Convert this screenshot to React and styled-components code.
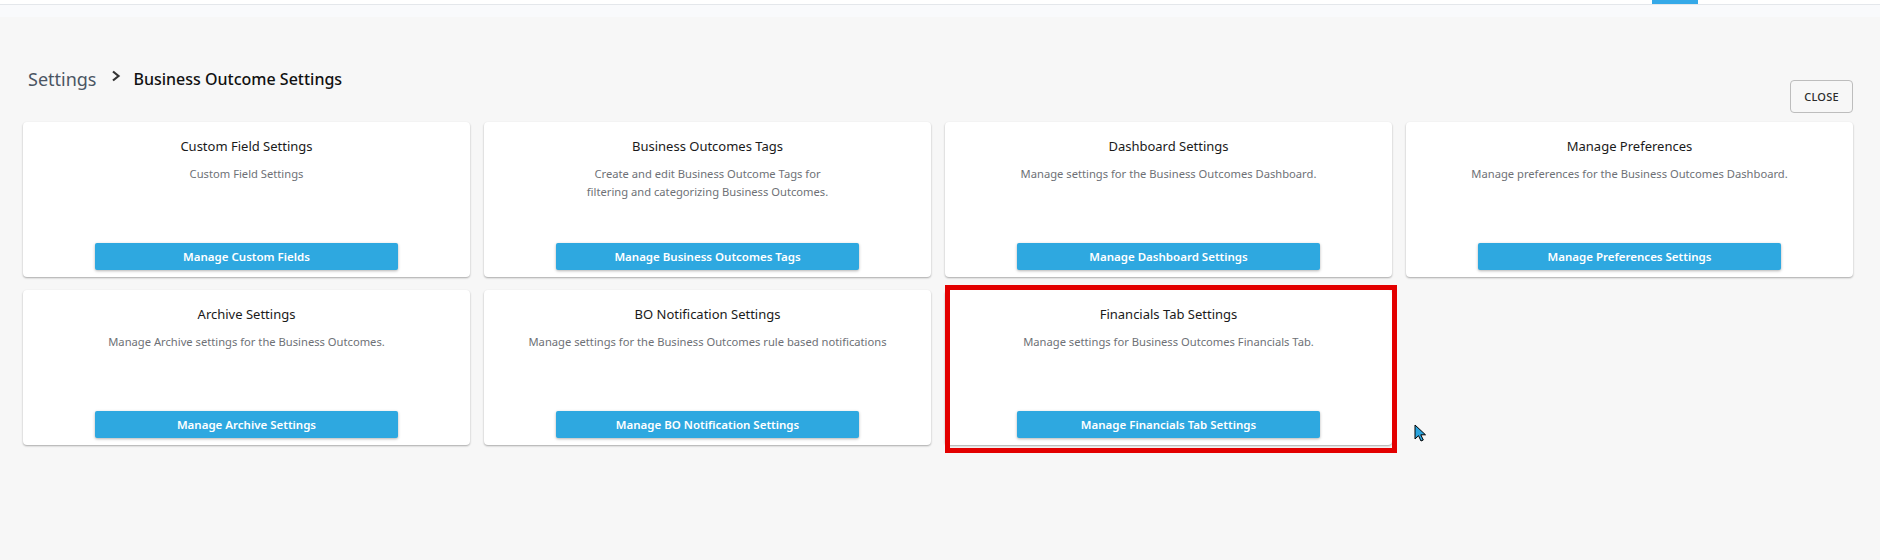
import React from 'react';
import styled, { createGlobalStyle } from 'styled-components';

const GlobalStyle = createGlobalStyle`
  body {
    margin: 0;
    background: #f7f7f7;
    font-family: "Noto Sans", "Open Sans", Arial, sans-serif;
  }
`;

const Page = styled.div`
  min-height: 560px;
  background: linear-gradient(#f9fafc 0, #f9fafc 17px, #f7f7f7 17px);
`;

const TopBar = styled.div`
  height: 4px;
  background: #fff;
  border-bottom: 1px solid #e4e7eb;
  display: flex;
  justify-content: flex-end;
  padding-right: 182px;
`;

const TabIndicator = styled.div`
  width: 46px;
  height: 4px;
  background: #35a9e8;
`;

const Content = styled.div`
  padding: 62px 27px 0 23px;
`;

const Header = styled.div`
  display: flex;
  justify-content: space-between;
  align-items: flex-start;
`;

const Breadcrumb = styled.div`
  display: flex;
  align-items: center;
  height: 24px;
  padding-left: 5px;
`;

const Crumb = styled.span`
  font-size: 18px;
  color: #4b5563;
`;

const Current = styled.span`
  font-size: 16px;
  font-weight: 500;
  color: #111;
`;

const Chevron = styled.svg`
  width: 10px;
  height: 12px;
  margin: -6px 13px 0 14px;
`;

const CloseButton = styled.button`
  margin-top: 13px;
  width: 63px;
  height: 33px;
  border: 1px solid #bdbdbd;
  border-radius: 4px;
  background: transparent;
  font-family: inherit;
  font-size: 11px;
  font-weight: 500;
  color: #2b2b2b;
  letter-spacing: 0.2px;
  cursor: pointer;
`;

const Grid = styled.div`
  margin-top: 9px;
  display: grid;
  grid-template-columns: repeat(4, 1fr);
  column-gap: 14px;
  row-gap: 13px;
`;

const Card = styled.div`
  position: relative;
  box-sizing: border-box;
  height: 155px;
  background: #fff;
  border-radius: 4px;
  box-shadow: 0 1px 2px rgba(0, 0, 0, 0.32);
  display: flex;
  flex-direction: column;
  align-items: center;
  padding: 15px 16px 7px;
  text-align: center;
`;

const Title = styled.div`
  font-size: 13px;
  line-height: 18px;
  color: #1a1a1a;
`;

const Description = styled.div`
  margin-top: 10px;
  font-size: 11.2px;
  line-height: 18px;
  color: #6e7176;
`;

const ActionButton = styled.button`
  margin-top: auto;
  width: 303px;
  height: 27px;
  border: none;
  border-radius: 2px;
  background: #2ea8e0;
  color: #fff;
  font-family: inherit;
  font-size: 11.5px;
  font-weight: 600;
  box-shadow: 0 1px 3px rgba(0, 0, 0, 0.3);
  cursor: pointer;
`;

const Highlight = styled.div`
  position: absolute;
  left: 0;
  top: -5px;
  width: 452px;
  height: 168px;
  box-sizing: border-box;
  border: 5px solid #e30000;
  pointer-events: none;
`;

const Cursor = styled.svg`
  position: absolute;
  left: 469px;
  top: 134px;
  width: 13px;
  height: 18px;
`;

const cards = [
  {
    title: 'Custom Field Settings',
    text: ['Custom Field Settings'],
    action: 'Manage Custom Fields',
  },
  {
    title: 'Business Outcomes Tags',
    text: ['Create and edit Business Outcome Tags for', 'filtering and categorizing Business Outcomes.'],
    action: 'Manage Business Outcomes Tags',
  },
  {
    title: 'Dashboard Settings',
    text: ['Manage settings for the Business Outcomes Dashboard.'],
    action: 'Manage Dashboard Settings',
  },
  {
    title: 'Manage Preferences',
    text: ['Manage preferences for the Business Outcomes Dashboard.'],
    action: 'Manage Preferences Settings',
  },
  {
    title: 'Archive Settings',
    text: ['Manage Archive settings for the Business Outcomes.'],
    action: 'Manage Archive Settings',
  },
  {
    title: 'BO Notification Settings',
    text: ['Manage settings for the Business Outcomes rule based notifications'],
    action: 'Manage BO Notification Settings',
  },
  {
    title: 'Financials Tab Settings',
    text: ['Manage settings for Business Outcomes Financials Tab.'],
    action: 'Manage Financials Tab Settings',
    highlighted: true,
  },
];

export default function App() {
  return (
    <Page>
      <GlobalStyle />
      <TopBar>
        <TabIndicator />
      </TopBar>
      <Content>
        <Header>
          <Breadcrumb>
            <Crumb>Settings</Crumb>
            <Chevron viewBox="0 0 10 12">
              <path d="M2 1.5 L7.5 6 L2 10.5" fill="none" stroke="#333" strokeWidth="2.2" />
            </Chevron>
            <Current>Business Outcome Settings</Current>
          </Breadcrumb>
          <CloseButton>CLOSE</CloseButton>
        </Header>
        <Grid>
          {cards.map((card) => (
            <Card key={card.title}>
              <Title>{card.title}</Title>
              <Description>
                {card.text.map((line, i) => (
                  <div key={i}>{line}</div>
                ))}
              </Description>
              <ActionButton>{card.action}</ActionButton>
              {card.highlighted && (
                <>
                  <Highlight />
                  <Cursor viewBox="0 0 13 18">
                    <path
                      d="M1 1 L1 15 L4.5 11.7 L7 17 L9.3 16 L6.8 10.8 L11.5 10.8 Z"
                      fill="#2ba4dd"
                      stroke="#000"
                      strokeWidth="1"
                      strokeLinejoin="round"
                    />
                  </Cursor>
                </>
              )}
            </Card>
          ))}
        </Grid>
      </Content>
    </Page>
  );
}
